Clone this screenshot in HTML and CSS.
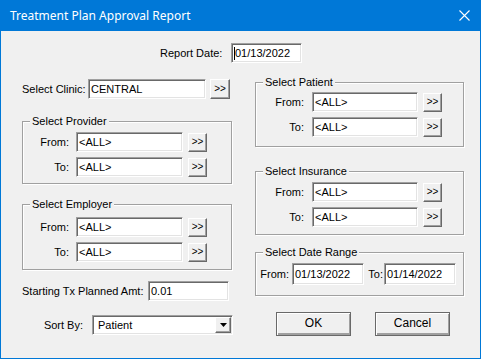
FILE: index.html
```html
<!DOCTYPE html>
<html lang="en">
<head>
    <meta charset="UTF-8">
    <title>Treatment Plan Approval Report</title>
    <link rel="stylesheet" href="styles.css">
</head>
<body>
    <div class="window">
        <div class="titlebar">
            <span class="title">Treatment Plan Approval Report</span>
            <svg class="close" width="11" height="11" viewBox="0 0 11 11">
                <path d="M0.5 0.5L10.5 10.5M10.5 0.5L0.5 10.5" stroke="#fff" stroke-width="1.1"/>
            </svg>
        </div>

        <div class="client">
            <div class="row report-row">
                <span class="label report-label">Report Date:</span>
                <div class="field report-field"><span class="caret"></span>01/13/2022</div>
            </div>

            <div class="columns">
                <div class="col col-left">
                    <div class="row clinic-row">
                        <span class="label clinic-label">Select Clinic:</span>
                        <div class="field clinic-field">CENTRAL</div>
                        <div class="pick pick--clinic">&gt;&gt;</div>
                    </div>

                    <fieldset class="group group--provider">
                        <legend>Select Provider</legend>
                        <div class="row">
                            <span class="label range-label">From:</span>
                            <div class="field range-field">&lt;ALL&gt;</div>
                            <div class="pick">&gt;&gt;</div>
                        </div>
                        <div class="row">
                            <span class="label range-label">To:</span>
                            <div class="field range-field">&lt;ALL&gt;</div>
                            <div class="pick">&gt;&gt;</div>
                        </div>
                    </fieldset>

                    <fieldset class="group group--employer">
                        <legend>Select Employer</legend>
                        <div class="row">
                            <span class="label range-label">From:</span>
                            <div class="field range-field">&lt;ALL&gt;</div>
                            <div class="pick">&gt;&gt;</div>
                        </div>
                        <div class="row">
                            <span class="label range-label">To:</span>
                            <div class="field range-field">&lt;ALL&gt;</div>
                            <div class="pick">&gt;&gt;</div>
                        </div>
                    </fieldset>

                    <div class="row amt-row">
                        <span class="label amt-label">Starting Tx Planned Amt:</span>
                        <div class="field amt-field">0.01</div>
                    </div>

                    <div class="row sort-row">
                        <span class="label sort-label">Sort By:</span>
                        <div class="field combo">
                            <span class="combo__text">Patient</span>
                            <div class="combo__drop">
                                <svg width="7" height="4" viewBox="0 0 7 4"><polygon points="0,0 7,0 3.5,4" fill="#000"/></svg>
                            </div>
                        </div>
                    </div>
                </div>

                <div class="col col-right">
                    <fieldset class="group group--patient">
                        <legend>Select Patient</legend>
                        <div class="row">
                            <span class="label range-label">From:</span>
                            <div class="field range-field">&lt;ALL&gt;</div>
                            <div class="pick">&gt;&gt;</div>
                        </div>
                        <div class="row">
                            <span class="label range-label">To:</span>
                            <div class="field range-field">&lt;ALL&gt;</div>
                            <div class="pick">&gt;&gt;</div>
                        </div>
                    </fieldset>

                    <fieldset class="group group--insurance">
                        <legend>Select Insurance</legend>
                        <div class="row">
                            <span class="label range-label">From:</span>
                            <div class="field range-field">&lt;ALL&gt;</div>
                            <div class="pick">&gt;&gt;</div>
                        </div>
                        <div class="row">
                            <span class="label range-label">To:</span>
                            <div class="field range-field">&lt;ALL&gt;</div>
                            <div class="pick">&gt;&gt;</div>
                        </div>
                    </fieldset>

                    <fieldset class="group group--dates">
                        <legend>Select Date Range</legend>
                        <div class="row">
                            <span class="label date-from-label">From:</span>
                            <div class="field date-field">01/13/2022</div>
                            <span class="label date-to-label">To:</span>
                            <div class="field date-field">01/14/2022</div>
                        </div>
                    </fieldset>

                    <div class="actions">
                        <div class="btn">OK</div>
                        <div class="btn">Cancel</div>
                    </div>
                </div>
            </div>
        </div>
    </div>
</body>
</html>
```

FILE: styles.css
```css
* {
    box-sizing: border-box;
}

html,
body {
    margin: 0;
    background: #f0f0f0;
}

body {
    font-family: "Liberation Sans", Arial, sans-serif;
    font-size: 11px;
    color: #000;
}

.window {
    width: 481px;
    height: 359px;
    border: 1px solid #0078d7;
    border-top: 0;
}

.titlebar {
    height: 31px;
    display: flex;
    align-items: center;
    justify-content: space-between;
    padding: 0 10px 0 9px;
    background: #0078d7;
    color: #fff;
}

.title {
    font-family: "Noto Sans", sans-serif;
    font-size: 12px;
}

.close {
    display: block;
}

.client {
    padding-top: 12px;
}

.row {
    display: flex;
    align-items: center;
}

.label {
    flex: none;
    white-space: nowrap;
}

/* sunken edit box */
.field {
    flex: none;
    height: 20px;
    padding: 0 2px;
    line-height: 18px;
    white-space: nowrap;
    overflow: hidden;
    background: #fff;
    border: 1px solid;
    border-color: #a0a0a0 #fff #fff #a0a0a0;
    box-shadow: inset 1px 1px 0 #696969, inset -1px -1px 0 #e3e3e3;
}

/* raised ">>" button */
.pick {
    flex: none;
    width: 19px;
    height: 19px;
    margin-left: 5px;
    text-align: center;
    line-height: 16px;
    font-size: 10px;
    background: #f0f0f0;
    border: 1px solid;
    border-color: #fff #696969 #696969 #fff;
    box-shadow: inset -1px -1px 0 #a0a0a0;
}

.report-row {
    padding-left: 159px;
}

.report-label {
    width: 71px;
    padding-right: 12px;
    text-align: right;
}

.report-field {
    width: 71px;
}

.caret {
    display: inline-block;
    width: 1px;
    height: 13px;
    margin-right: 0;
    vertical-align: -3px;
    background: #000;
}

.columns {
    display: flex;
    align-items: flex-start;
    gap: 23px;
    padding-left: 21px;
}

.col-left {
    width: 210px;
    margin-top: 16px;
}

.col-right {
    width: 209px;
    margin-top: 13px;
}

.clinic-label {
    width: 66px;
}

.clinic-field {
    width: 118px;
}

.pick--clinic {
    width: 20px;
    height: 20px;
    margin-left: 4px;
    line-height: 17px;
}

/* etched group box */
.group {
    min-width: 0;
    margin: 0;
    padding: 0;
    border: 1px solid #a0a0a0;
    box-shadow: 1px 1px 0 #fff, inset 1px 1px 0 #fff;
}

.group legend {
    margin-left: 7px;
    padding: 0 2px;
    line-height: 13px;
    background: #f0f0f0;
}

.group .row + .row {
    margin-top: 5px;
}

.range-label {
    text-align: right;
}

.col-left .range-label {
    width: 53px;
    padding-right: 7px;
}

.col-left .range-field {
    width: 107px;
}

.col-right .range-label {
    width: 56px;
    padding-right: 8px;
}

.col-right .range-field {
    width: 106px;
}

.group--provider {
    margin-top: 16px;
    padding: 4px 0 6px;
}

.group--employer {
    margin-top: 14px;
    padding: 6px 0 7px;
}

.amt-row {
    margin-top: 11px;
}

.amt-label {
    width: 126px;
}

.amt-field {
    width: 81px;
}

.sort-row {
    margin-top: 14px;
}

.sort-label {
    width: 70px;
    padding-right: 9px;
    text-align: right;
}

.combo {
    display: flex;
    width: 141px;
    padding: 1px;
}

.combo__text {
    flex: 1;
    padding-left: 4px;
    line-height: 16px;
}

.combo__drop {
    width: 16px;
    height: 16px;
    display: flex;
    align-items: center;
    justify-content: center;
    background: #f0f0f0;
    border: 1px solid;
    border-color: #fff #696969 #696969 #fff;
    box-shadow: inset -1px -1px 0 #a0a0a0;
}

.combo__drop svg {
    display: block;
}

.group--patient {
    padding: 3px 0 9px;
}

.group--insurance {
    margin-top: 18px;
    padding: 4px 0 7px;
}

.group--dates {
    margin-top: 11px;
    padding: 4px 0 10px;
}

.date-from-label {
    width: 36px;
    padding-right: 3px;
    text-align: right;
}

.date-to-label {
    width: 20px;
    padding-right: 1px;
    text-align: right;
}

.date-field {
    width: 72px;
    height: 22px;
    line-height: 20px;
}

.actions {
    display: flex;
    gap: 24px;
    margin-top: 16px;
    padding-left: 21px;
}

.btn {
    width: 75px;
    height: 24px;
    text-align: center;
    line-height: 21px;
    font-size: 12px;
    background: #f0f0f0;
    border: 1px solid #696969;
    box-shadow: inset 1px 1px 0 #fff, inset -1px -2px 0 #a0a0a0;
}
```
